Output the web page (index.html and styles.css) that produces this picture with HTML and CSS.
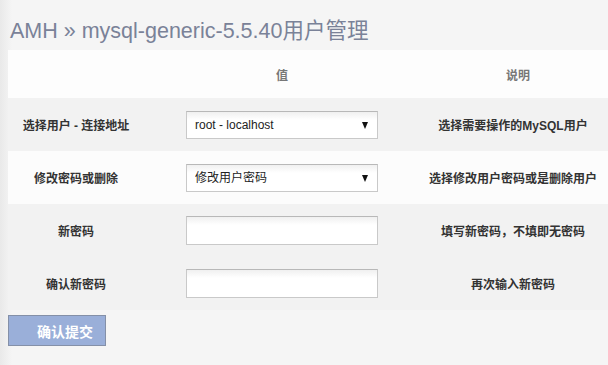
FILE: index.html
```html
<!DOCTYPE html>
<html lang="zh-CN">
<head>
    <meta charset="UTF-8">
    <title>AMH - MySQL 用户管理</title>
    <link rel="stylesheet" href="styles.css">
</head>
<body>
    <div class="page">
        <h2 class="title">AMH » mysql-generic-5.5.40用户管理</h2>

        <form class="user-form">
            <table class="form-table">
                <tr class="head-row">
                    <th class="col-label"></th>
                    <th class="col-value">值</th>
                    <th class="col-note">说明</th>
                </tr>
                <tr class="row-grey">
                    <td>选择用户 - 连接地址</td>
                    <td>
                        <span class="select-wrap">
                            <select class="field">
                                <option>root - localhost</option>
                            </select>
                        </span>
                    </td>
                    <td>选择需要操作的MySQL用户</td>
                </tr>
                <tr class="row-white">
                    <td>修改密码或删除</td>
                    <td>
                        <span class="select-wrap">
                            <select class="field">
                                <option>修改用户密码</option>
                                <option>删除用户</option>
                            </select>
                        </span>
                    </td>
                    <td>选择修改用户密码或是删除用户</td>
                </tr>
                <tr class="row-grey">
                    <td>新密码</td>
                    <td><input class="field" type="password"></td>
                    <td>填写新密码，不填即无密码</td>
                </tr>
                <tr class="row-grey">
                    <td>确认新密码</td>
                    <td><input class="field" type="password"></td>
                    <td>再次输入新密码</td>
                </tr>
            </table>
            <button class="submit-btn" type="button">确认提交</button>
        </form>
    </div>
</body>
</html>
```

FILE: styles.css
```css
html, body {
    margin: 0;
    padding: 0;
}
body {
    background: linear-gradient(to right, #e9e9e9, #f5f5f5 12px);
    font-family: "Liberation Sans", "Noto Sans CJK SC", sans-serif;
    color: #333;
    overflow: hidden;
}
.page {
    width: 608px;
    height: 365px;
    overflow: hidden;
}
.title {
    margin: 0;
    padding: 13px 0 0 10px;
    height: 37px;
    font-size: 21.5px;
    font-weight: normal;
    color: #7a8298;
}
.user-form {
    margin-left: 8px;
}
.form-table {
    width: 616px;
    border-collapse: collapse;
    table-layout: fixed;
    font-size: 12px;
}
.col-label {
    width: 144px;
}
.col-value {
    width: 260px;
}
.col-note {
    width: 212px;
}
.form-table th,
.form-table td {
    text-align: center;
    padding: 0;
}
.form-table th {
    height: 48px;
    color: #777;
    font-weight: bold;
}
.form-table td {
    height: 53px;
    color: #333;
    font-weight: bold;
}
.head-row {
    background: #fdfdfd;
}
.row-grey {
    background: #f2f2f2;
}
.row-white {
    background: #fcfcfc;
}
.row-grey td:first-child,
.row-white td:first-child {
    padding-right: 8px;
}
.form-table td:last-child {
    padding-right: 10px;
}
.field {
    box-sizing: border-box;
    width: 192px;
    height: 29px;
    margin: 0;
    border: 1px solid #c9c9c9;
    border-top-color: #b8b8b8;
    background: linear-gradient(#f0f0f0, #ffffff 8px);
    font-family: "Liberation Sans", "Noto Sans CJK SC", sans-serif;
    font-size: 12px;
    color: #222;
    outline: none;
    vertical-align: middle;
}
select.field {
    appearance: none;
    -webkit-appearance: none;
    padding: 0 22px 0 8px;
    height: 28px;
    border-radius: 0;
}
.select-wrap {
    position: relative;
    display: inline-block;
    vertical-align: middle;
}
.select-wrap::after {
    content: "";
    position: absolute;
    right: 10px;
    top: 11px;
    border-left: 3px solid transparent;
    border-right: 3px solid transparent;
    border-top: 7px solid #111;
    pointer-events: none;
}
.submit-btn {
    display: block;
    margin-top: 5px;
    width: 98px;
    height: 31px;
    padding: 0 0 0 16px;
    border: 1px solid #8490a8;
    background: #9aafd9;
    color: #fff;
    font-family: "Liberation Sans", "Noto Sans CJK SC", sans-serif;
    font-size: 14px;
    font-weight: bold;
    cursor: pointer;
}
```
